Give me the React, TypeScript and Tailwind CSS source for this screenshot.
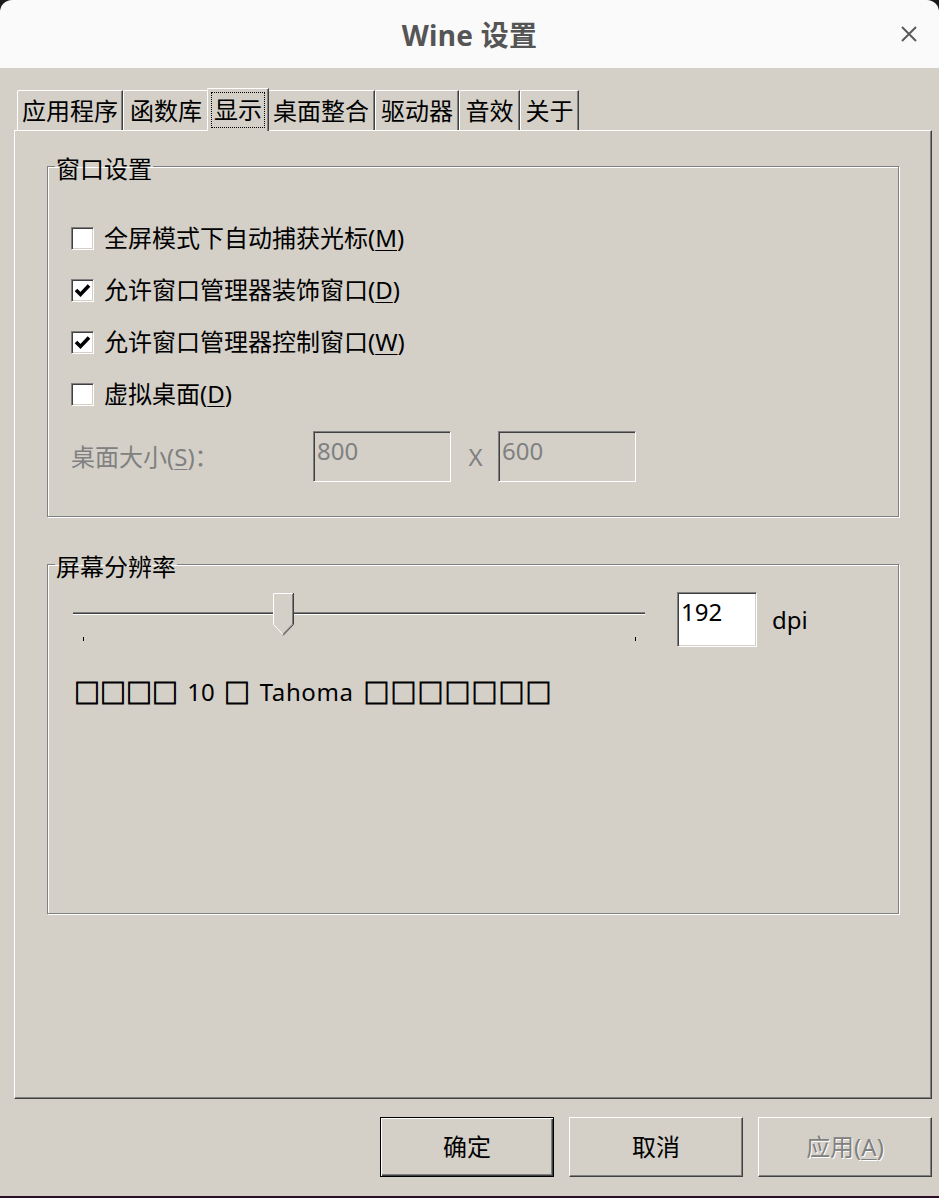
import React from "react";

const F = "font-['Noto_Sans','Noto_Sans_CJK_SC',sans-serif]";

function Check({ checked }: { checked?: boolean }) {
  return (
    <div className="w-[23px] h-[23px] shrink-0 bg-white border border-t-[#808080] border-l-[#808080] border-b-white border-r-white shadow-[inset_1px_1px_0_#404040,inset_-1px_-1px_0_#d4d0c8] flex items-center justify-center">
      {checked && (
        <svg width="17" height="17" viewBox="0 0 17 17">
          <path d="M2 8 L6.5 12.5 L15 3.5" stroke="#000" strokeWidth="3.6" fill="none" strokeLinejoin="miter" />
        </svg>
      )}
    </div>
  );
}

function U({ c }: { c: string }) {
  return <span className="underline underline-offset-[3px] decoration-1">{c}</span>;
}

function Row({ checked, children }: { checked?: boolean; children: React.ReactNode }) {
  return (
    <div className="h-[52px] flex items-center gap-[10px]">
      <Check checked={checked} />
      <span className="text-[24px] leading-[28px] text-black">{children}</span>
    </div>
  );
}

function Tofu({ n, wide }: { n: number; wide?: boolean }) {
  return (
    <span
      className={`font-['Noto_Sans_CJK_SC',sans-serif] text-[26px] text-black [-webkit-text-stroke:0.9px_#000] ${
        wide ? "tracking-[1px]" : "tracking-[0px]"
      }`}
    >
      {"□".repeat(n)}
    </span>
  );
}

const tabs = [
  { t: "应用程序", w: "w-[106px]" },
  { t: "函数库", w: "w-[86px]" },
  { t: "显示", w: "w-[62px]", sel: true },
  { t: "桌面整合", w: "w-[108px]" },
  { t: "驱动器", w: "w-[84px]" },
  { t: "音效", w: "w-[61px]" },
  { t: "关于", w: "w-[59px]" },
];

export default function App() {
  return (
    <div className={`w-[939px] h-[1198px] bg-[#1a1a1a] flex flex-col overflow-hidden ${F}`}>
      {/* title bar */}
      <div className="h-[68px] shrink-0 bg-[#fafafa] rounded-t-[12px] grid grid-cols-[1fr_auto_1fr] items-center">
        <div />
        <div className="text-[28px] font-bold text-[#555555] leading-none pt-[2px] tracking-[0.3px]">Wine 设置</div>
        <div className="flex justify-end pr-[21px]">
          <svg width="18" height="18" viewBox="0 0 18 18">
            <path d="M2 2 L16 16 M16 2 L2 16" stroke="#5a5a5a" strokeWidth="2" />
          </svg>
        </div>
      </div>

      {/* body */}
      <div className="flex-1 bg-[#d4d0c8] pt-[20px] flex flex-col">
        {/* tabs */}
        <div className="ml-[17px] h-[42px] flex items-end relative z-10">
          {tabs.map((tb) =>
            tb.sel ? (
              <div
                key={tb.t}
                className={`${tb.w} -mx-[2px] h-[43px] -mb-[1px] bg-[#d4d0c8] border-t border-l border-white border-r border-r-[#404040] rounded-tl-[2px] shadow-[inset_-1px_0_0_#808080] flex items-start justify-center pt-[3px] relative z-10`}
              >
                <div className="px-[2px] h-[36px] border border-dotted border-black flex items-center text-[24px] leading-[28px] text-black">
                  {tb.t}
                </div>
              </div>
            ) : (
              <div
                key={tb.t}
                className={`${tb.w} h-[40px] border-t border-l border-white border-r border-r-[#404040] rounded-tl-[2px] shadow-[inset_-1px_0_0_#808080] flex items-center justify-center text-[24px] leading-[28px] text-black`}
              >
                {tb.t}
              </div>
            )
          )}
        </div>

        {/* panel */}
        <div className="ml-[14px] w-[918px] h-[969px] border border-t-white border-l-white border-r-[#404040] border-b-[#404040] shadow-[inset_-1px_-1px_0_#808080] flex flex-col">
          {/* group 1 */}
          <fieldset className="mt-[18px] ml-[32px] w-[852px] border border-[#808080] shadow-[1px_1px_0_#ffffff,inset_1px_1px_0_#ffffff] pb-[34px]">
            <legend className="ml-[7px] px-[1px] pt-[6px] text-[24px] leading-[28px] text-black">窗口设置</legend>
            <div className="pt-[29px] pl-[23px] flex flex-col">
              <Row>
                全屏模式下自动捕获光标(<U c="M" />)
              </Row>
              <Row checked>
                允许窗口管理器装饰窗口(<U c="D" />)
              </Row>
              <Row checked>
                允许窗口管理器控制窗口(<U c="W" />)
              </Row>
              <Row>
                虚拟桌面(<U c="D" />)
              </Row>
              <div className="mt-[11px] h-[51px] flex items-center">
                <div className="w-[242px] text-[24px] leading-[28px] text-[#808080]">
                  桌面大小(<U c="S" />)：
                </div>
                <div className="w-[138px] h-[51px] border border-t-[#808080] border-l-[#808080] border-b-white border-r-white shadow-[inset_1px_1px_0_#404040] pl-[3px] pt-[5px] text-[24px] leading-[28px] text-[#808080]">
                  800
                </div>
                <div className="w-[47px] pl-[2px] text-center text-[24px] leading-[28px] text-[#808080]">X</div>
                <div className="w-[138px] h-[51px] border border-t-[#808080] border-l-[#808080] border-b-white border-r-white shadow-[inset_1px_1px_0_#404040] pl-[3px] pt-[5px] text-[24px] leading-[28px] text-[#808080]">
                  600
                </div>
              </div>
            </div>
          </fieldset>

          {/* group 2 */}
          <fieldset className="mt-[30px] ml-[32px] w-[852px] h-[367px] border border-[#808080] shadow-[1px_1px_0_#ffffff,inset_1px_1px_0_#ffffff]">
            <legend className="ml-[7px] px-[1px] pt-[6px] text-[24px] leading-[28px] text-black">屏幕分辨率</legend>
            <div className="pt-[11px] pl-[25px] flex items-start">
              <div className="relative w-[572px] h-[55px]">
                <div className="mt-[20px] h-[1px] bg-[#808080]" />
                <div className="h-[1px] bg-[#404040]" />
                <div className="h-[1px] bg-white" />
                <svg className="absolute left-[200px] top-[1px]" width="21" height="43" viewBox="0 0 21 43">
                  <path d="M0.5 0.5 H19.5 V31.5 L10 41.5 L0.5 31.5 Z" fill="#d4d0c8" />
                  <path d="M0.5 31.5 V0.5 H19.5" stroke="#ffffff" strokeWidth="1" fill="none" />
                  <path d="M0.5 31.5 L10 41.5" stroke="#ffffff" strokeWidth="1" fill="none" />
                  <path d="M20.5 0 V31.5 L10 42.5" stroke="#404040" strokeWidth="1" fill="none" />
                  <path d="M19.5 1 V31 L10 41" stroke="#808080" strokeWidth="1" fill="none" />
                </svg>
                <div className="absolute left-[10px] top-[45px] w-[1px] h-[4px] bg-black" />
                <div className="absolute left-[562px] top-[45px] w-[1px] h-[4px] bg-black" />
              </div>
              <div className="ml-[32px] w-[80px] h-[55px] bg-white border border-t-[#808080] border-l-[#808080] border-b-white border-r-white shadow-[inset_1px_1px_0_#404040,inset_-1px_-1px_0_#d4d0c8] pl-[3px] pt-[5px] text-[24px] leading-[28px] text-black">
                192
              </div>
              <div className="ml-[15px] self-center text-[24px] leading-[28px] text-black">dpi</div>
            </div>
            <div className="mt-[29px] pl-[26px] text-[24px] leading-[32px] text-black whitespace-pre flex items-center [word-spacing:3px]">
              <Tofu n={4} />
              <span> 10 </span>
              <Tofu n={1} />
              <span className="tracking-[0.6px]"> Tahoma </span>
              <Tofu n={7} wide />
            </div>
          </fieldset>
        </div>

        {/* buttons */}
        <div className="mt-[18px] pr-[7px] flex justify-end gap-[15px]">
          <div className="w-[174px] h-[60px] border border-black shadow-[inset_1px_1px_0_#ffffff,inset_-1px_-1px_0_#404040,inset_-2px_-2px_0_#808080] flex items-center justify-center text-[24px] text-black">
            确定
          </div>
          <div className="w-[174px] h-[60px] border border-t-white border-l-white border-r-[#404040] border-b-[#404040] shadow-[inset_-1px_-1px_0_#808080] flex items-center justify-center text-[24px] text-black">
            取消
          </div>
          <div className="w-[174px] h-[60px] border border-t-white border-l-white border-r-[#404040] border-b-[#404040] shadow-[inset_-1px_-1px_0_#808080] flex items-center justify-center text-[24px] text-[#808080] [text-shadow:1px_1px_0_#ffffff]">
            应用(<U c="A" />)
          </div>
        </div>
      </div>
      <div className="h-[2px] shrink-0 bg-[#2c0e24]" />
    </div>
  );
}
